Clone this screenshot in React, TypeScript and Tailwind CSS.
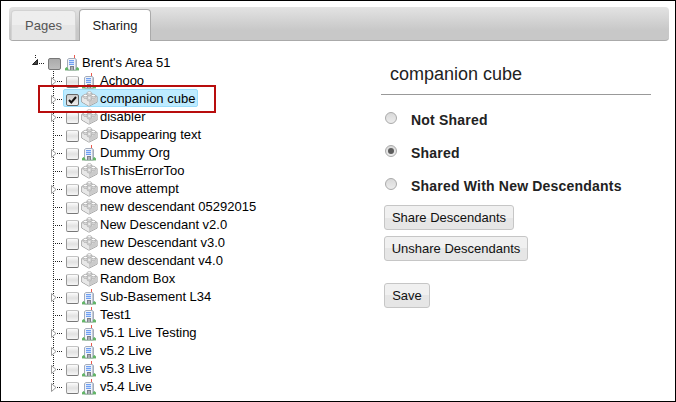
import React from "react";

type Node = { label: string; kind: "org" | "box"; open?: boolean; checked?: boolean };

const nodes: Node[] = [
  { label: "Achooo", kind: "org", open: true },
  { label: "companion cube", kind: "box", open: true, checked: true },
  { label: "disabler", kind: "box", open: true },
  { label: "Disappearing text", kind: "box" },
  { label: "Dummy Org", kind: "org", open: true },
  { label: "IsThisErrorToo", kind: "box" },
  { label: "move attempt", kind: "box", open: true },
  { label: "new descendant 05292015", kind: "box" },
  { label: "New Descendant v2.0", kind: "box" },
  { label: "new Descendant v3.0", kind: "box" },
  { label: "new descendant v4.0", kind: "box" },
  { label: "Random Box", kind: "box" },
  { label: "Sub-Basement L34", kind: "org", open: true },
  { label: "Test1", kind: "org" },
  { label: "v5.1 Live Testing", kind: "org", open: true },
  { label: "v5.2 Live", kind: "org", open: true },
  { label: "v5.3 Live", kind: "org", open: true },
  { label: "v5.4 Live", kind: "org", open: true },
];

function Building() {
  return (
    <svg width="16" height="16" viewBox="0 0 16 16" className="mt-0.5 shrink-0">
      <path d="M10 0h1v3h-1z" fill="#ea5a4e" />
      <path d="M3.500 4.500 5 3.500h6.500l1 1V15h-9z" fill="#f1f4f9" stroke="#a4acba" />
      <path d="M11 4h1v10h-1z" fill="#c3cad6" />
      <path d="M5 5h5v1H5zM5 7h5v1H5zM5 9h5v1H5z" fill="#6f9ff2" />
      <path d="M5 6h5v1H5zM5 8h5v1H5z" fill="#c9dcfc" />
      <path d="M6 11h4v4H6z" fill="#7c8088" />
      <path d="M7 12h2v3H7z" fill="#a9adb3" />
      <path d="M1 15v-1.500l1.500-1.500L4 13l.5 2zM11.500 15l.5-2 1.500-1L15 13.500V15z" fill="#62b566" />
      <path d="M1 15h14v.5H1z" fill="#7fae80" />
    </svg>
  );
}

function Brick() {
  return (
    <svg width="17" height="16" viewBox="0 0 17 16" className="mt-0.5 shrink-0">
      <path d="M.7 5.500 8.500 1.500 16.100 5.500v5.600L8 15.200.7 11z" fill="#f0f0f0" stroke="#9c9c9c" strokeWidth=".9" />
      <path d="M1.200 6.500 8 10v4.700l-6.800-3.900z" fill="#e8e8e8" />
      <path d="M8 10l7.600-3.600v4.400L8 14.700z" fill="#cbcbcb" />
      <g stroke="#a6a6a6" strokeWidth=".7" fill="#dcdcdc">
        <path d="M6.200 1.800v2c0 1.300 4.300 1.300 4.300 0v-2" />
        <ellipse cx="8.350" cy="1.800" rx="2.150" ry="1.200" fill="#fcfcfc" />
        <path d="M2.300 4.500v2c0 1.300 4.200 1.300 4.200 0v-2" />
        <ellipse cx="4.400" cy="4.500" rx="2.100" ry="1.200" fill="#fcfcfc" />
        <path d="M10.300 4.500v2c0 1.300 4.200 1.300 4.200 0v-2" />
        <ellipse cx="12.400" cy="4.500" rx="2.100" ry="1.200" fill="#fcfcfc" />
        <path d="M6.100 7v2c0 1.300 4.400 1.300 4.400 0V7" />
        <ellipse cx="8.300" cy="7" rx="2.200" ry="1.200" fill="#fcfcfc" />
      </g>
    </svg>
  );
}

function Check({ on, partial }: { on?: boolean; partial?: boolean }) {
  const tone = partial
    ? "border-[#777] bg-linear-to-b from-[#aaa] to-[#bdbdbd]"
    : on
      ? "border-[#666] bg-linear-to-b from-[#ccc] to-[#eee]"
      : "border-[#999] border-t-[#c4c4c4] border-b-[#777] bg-linear-to-b from-[#fcfcfc] via-[#e2e2e2] to-[#f6f6f6]";
  return (
    <span className={"mt-[5px] block h-[12px] w-[13px] shrink-0 rounded-[2px] border " + tone}>
      {on && (
        <svg width="11" height="10" viewBox="0 0 11 10" className="block">
          <path d="M2 5 4.300 7.500 9 2" fill="none" stroke="#111" strokeWidth="2" />
        </svg>
      )}
    </span>
  );
}

function Branch({ open, last }: { open?: boolean; last?: boolean }) {
  return (
    <svg width="15" height="18" viewBox="0 0 15 18" className="shrink-0">
      <path d={last ? "M2.500 0v11" : "M2.500 0v18"} stroke="#222" strokeDasharray="1 1" />
      <path d="M6 10.500h6" stroke="#222" strokeDasharray="1 1" />
      {open ? (
        <path d="M.5 6.500v8l4.500-4z" fill="#fff" stroke="#999" />
      ) : (
        <path d="M4 10.500h1" stroke="#222" />
      )}
    </svg>
  );
}

function Radio({ label, on }: { label: string; on?: boolean }) {
  return (
    <div className="flex h-[33px]">
      <span className="mt-[10px] flex h-3 w-3 shrink-0 items-center justify-center rounded-full border border-[#aaa] bg-linear-to-b from-[#d9d9d9] to-[#ececec]">
        {on && <span className="h-1.5 w-1.5 rounded-full bg-[#5c5c5c]" />}
      </span>
      <span className="ml-[14px] mt-[9px] whitespace-nowrap text-[14px] font-bold leading-[18px] tracking-[0.2px] text-[#222]">{label}</span>
    </div>
  );
}

function Button({ label, className }: { label: string; className: string }) {
  return (
    <button
      className={
        "block h-[25px] rounded-[3px] border border-[#c6c6c6] bg-linear-to-b from-[#f0f0f0] from-50% to-[#e6e6e6] to-50% text-center text-[13px] leading-[23px] text-[#111] " +
        className
      }
    >
      {label}
    </button>
  );
}

export default function App() {
  return (
    <div className="relative h-[402px] w-[676px] overflow-hidden border border-black bg-white font-['Liberation_Sans',Arial,sans-serif] text-[13px] text-black">
      <div className="ml-2 mt-1.5 flex h-[34px] w-[660px] items-end rounded-[4px] border-b border-[#aaa] bg-linear-to-b from-[#e3e3e3] to-[#c8c8c8] to-70% pl-0.5">
        <div className="h-[30px] w-[65px] rounded-t-[4px] border border-b-0 border-[#d3d3d3] bg-linear-to-b from-[#eee] from-50% to-[#e6e6e6] to-50% text-center leading-[30px] text-[#555]">
          Pages
        </div>
        <div className="-mb-px ml-[3px] h-8 w-[72px] rounded-t-[4px] border border-b-0 border-[#aaa] bg-white text-center leading-[31px] text-[#212121]">
          Sharing
        </div>
      </div>
      <div className="flex">
        <div className="ml-[30px] mt-3 w-[349px] leading-[18px]">
          <div className="flex h-[18px]">
            <svg width="17" height="18" viewBox="0 0 17 18" className="shrink-0">
              <path d="M4.500 2v4" stroke="#222" strokeDasharray="1 1" />
              <path d="M1.500 11.500h5v-5z" fill="#444" stroke="#222" />
              <path d="M8 10.500h6" stroke="#222" strokeDasharray="1 1" />
            </svg>
            <Check partial />
            <span className="ml-[3px] flex"><Building /></span>
            <span className="ml-0.5 pt-px">Brent's Area 51</span>
          </div>
          {nodes.map((n, i) => (
            <div key={n.label} className="ml-5 flex h-[18px]">
              <Branch open={n.open} last={i === nodes.length - 1} />
              {n.checked ? (
                <div className="-ml-[3px] flex h-[18px] w-[135px] rounded-[2px] border border-[#99defd] bg-[#beebff] pl-0.5">
                  <span className="-mt-px flex">
                    <Check on />
                    <span className="ml-0.5 flex"><Brick /></span>
                    <span className="ml-0.5 whitespace-nowrap pt-px">{n.label}</span>
                  </span>
                </div>
              ) : (
                <>
                  <Check />
                  <span className="ml-0.5 flex w-[17px] shrink-0">{n.kind === "org" ? <Building /> : <Brick />}</span>
                  <span className="ml-0.5 whitespace-nowrap pt-px">{n.label}</span>
                </>
              )}
            </div>
          ))}
        </div>
        <div className="mt-[21px] ml-px w-[270px]">
          <h1 className="pl-[9px] text-[18px] leading-6 text-[#222]">companion cube</h1>
          <hr className="mt-2 border-t border-[#999]" />
          <div className="ml-1 mt-[7px]">
            <Radio label="Not Shared" />
            <Radio label="Shared" on />
            <Radio label="Shared With New Descendants" />
          </div>
          <Button label="Share Descendants" className="ml-[3px] mt-1 w-[130px]" />
          <Button label="Unshare Descendants" className="ml-[3px] mt-1.5 w-[144px]" />
          <Button label="Save" className="ml-[3px] mt-[22px] w-[46px]" />
        </div>
      </div>
      <div className="absolute left-[37px] top-[84px] h-[28px] w-[178px] border-2 border-[#b80d0d]" />
    </div>
  );
}
